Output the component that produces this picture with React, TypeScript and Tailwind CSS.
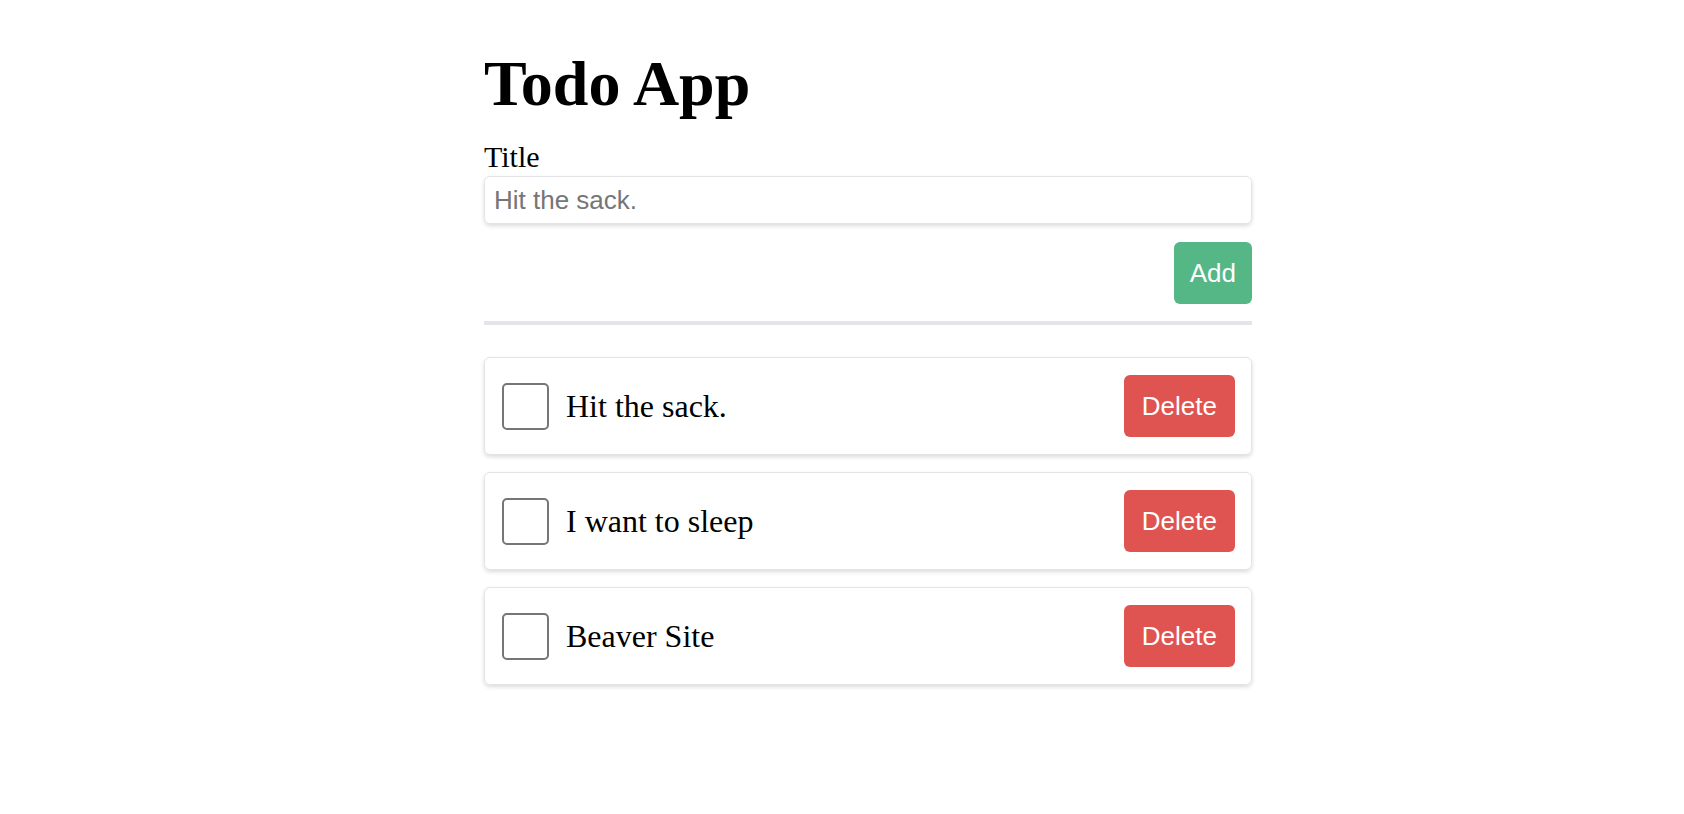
import { useState } from "react";

type Todo = { id: number; title: string; done: boolean };

export default function App() {
  const [title, setTitle] = useState("");
  const [todos, setTodos] = useState<Todo[]>([
    { id: 1, title: "Hit the sack.", done: false },
    { id: 2, title: "I want to sleep", done: false },
    { id: 3, title: "Beaver Site", done: false },
  ]);

  function addTodo() {
    if (!title.trim()) return;
    setTodos([...todos, { id: Date.now(), title, done: false }]);
    setTitle("");
  }

  return (
    <div className="min-h-screen bg-white text-black font-['Liberation_Serif','Times_New_Roman',serif]">
      <div className="ml-[484px] w-[768px] pt-[49px] pb-10">
        <h1 className="text-[64px] leading-[70px] font-bold mb-[21px]">Todo App</h1>

        <label className="block text-[30px] leading-[33px] mb-[3px]">Title</label>
        <input
          value={title}
          onChange={(e) => setTitle(e.target.value)}
          placeholder="Hit the sack."
          className="w-full h-[48px] px-[9px] border border-[#e3e3e8] rounded-md shadow-[0_2px_4px_rgba(0,0,0,0.14)] text-[26px] font-['Liberation_Sans',Arial,sans-serif] placeholder:text-[#767676] focus:outline-none"
        />

        <div className="flex justify-end mt-[18px]">
          <button
            onClick={addTodo}
            className="h-[62px] px-4 rounded-md bg-[#55b786] text-white text-[26px] font-['Liberation_Sans',Arial,sans-serif]"
          >
            Add
          </button>
        </div>

        <div className="h-[4px] bg-[#e4e4ea] mt-[17px] mb-[32px]" />

        <div className="flex flex-col gap-[17px]">
          {todos.map((t) => (
            <div
              key={t.id}
              className="h-[98px] flex items-center gap-[17px] pl-[17px] pr-4 border border-[#e3e3e8] rounded-md shadow-[0_2px_4px_rgba(0,0,0,0.14)]"
            >
              <input
                type="checkbox"
                checked={t.done}
                onChange={() =>
                  setTodos(todos.map((x) => (x.id === t.id ? { ...x, done: !x.done } : x)))
                }
                className="appearance-none w-[47px] h-[47px] border-2 border-[#767676] rounded-[5px] checked:bg-[#0075ff] checked:border-[#0075ff] shrink-0"
              />
              <span className="flex-1 text-[32px] leading-[37px]">{t.title}</span>
              <button
                onClick={() => setTodos(todos.filter((x) => x.id !== t.id))}
                className="h-[62px] px-[18px] rounded-md bg-[#df5450] text-white text-[26px] font-['Liberation_Sans',Arial,sans-serif]"
              >
                Delete
              </button>
            </div>
          ))}
        </div>
      </div>
    </div>
  );
}
